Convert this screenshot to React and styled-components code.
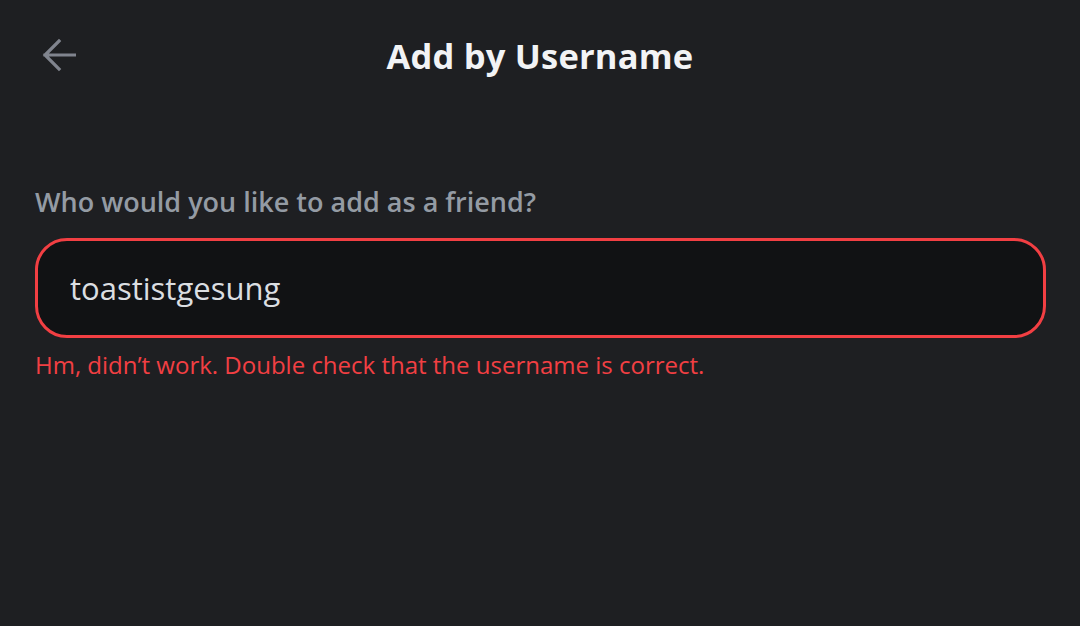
import React from 'react';
import styled, { createGlobalStyle } from 'styled-components';

const GlobalStyle = createGlobalStyle`
  html, body {
    margin: 0;
    padding: 0;
    background: #1e1f22;
  }
  * { box-sizing: border-box; }
`;

const Screen = styled.div`
  width: 1080px;
  height: 626px;
  background: #1e1f22;
  font-family: 'Open Sans', 'Noto Sans', sans-serif;
  overflow: hidden;
`;

const Header = styled.header`
  display: grid;
  grid-template-columns: 120px 1fr 120px;
  align-items: center;
  height: 110px;
`;

const BackButton = styled.button`
  display: flex;
  align-items: center;
  justify-content: flex-start;
  padding: 0 0 0 40px;
  height: 40px;
  border: 0;
  background: transparent;
  color: #80848e;
  cursor: pointer;
`;

const Title = styled.h1`
  margin: 0;
  text-align: center;
  font-size: 34.5px;
  font-weight: 700;
  color: #f2f3f5;
  letter-spacing: 0.2px;
`;

const Body = styled.div`
  padding: 76px 34px 0 35px;
`;

const Label = styled.label`
  display: block;
  margin-bottom: 20px;
  font-size: 27px;
  line-height: 32px;
  font-weight: 600;
  color: #949ba4;
`;

const InputBox = styled.div`
  display: flex;
  align-items: center;
  height: 100px;
  padding: 0 32px;
  border: 3px solid ${(p) => (p.$error ? '#f23f43' : '#4e5058')};
  border-radius: 32px;
  background: #111214;
`;

const Input = styled.input`
  flex: 1;
  border: 0;
  outline: none;
  background: transparent;
  font-family: inherit;
  font-size: 31px;
  font-weight: 500;
  color: #dbdee1;
  padding: 0;
`;

const ErrorText = styled.p`
  margin: 12px 0 0;
  font-size: 24px;
  line-height: 30px;
  font-weight: 500;
  color: #f23f43;
`;

const ArrowLeft = () => (
  <svg width="36" height="36" viewBox="0 0 36 36" fill="none" stroke="currentColor" strokeWidth="3.2" strokeLinecap="square">
    <path d="M5 18h30M19 4L5 18l14 14" />
  </svg>
);

export default function App() {
  return (
    <Screen>
      <GlobalStyle />
      <Header>
        <BackButton aria-label="Back">
          <ArrowLeft />
        </BackButton>
        <Title>Add by Username</Title>
        <div />
      </Header>
      <Body>
        <Label htmlFor="username">Who would you like to add as a friend?</Label>
        <InputBox $error>
          <Input id="username" defaultValue="toastistgesung" />
        </InputBox>
        <ErrorText>Hm, didn’t work. Double check that the username is correct.</ErrorText>
      </Body>
    </Screen>
  );
}
